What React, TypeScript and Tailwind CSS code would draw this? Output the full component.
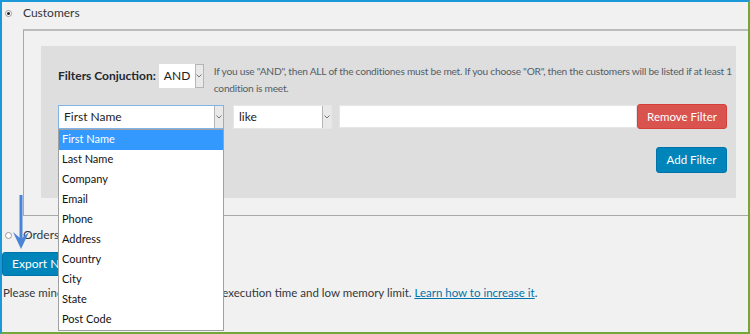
import React from "react";

const font = { fontFamily: 'Lato, "Open Sans", Arial, sans-serif' };

function Chevron() {
  return (
    <svg width="6" height="4" viewBox="0 0 6 4" className="block">
      <path d="M0.5 0.5 L3 3 L5.5 0.5" fill="none" stroke="#777" strokeWidth="1" />
    </svg>
  );
}

function SelectBox({
  text,
  width,
  focused,
  children,
}: {
  text: string;
  width: string;
  focused?: boolean;
  children?: React.ReactNode;
}) {
  return (
    <div
      className={`relative flex h-[24px] shrink-0 ${width} bg-white ${
        focused ? "border border-[#7eb4ea]" : "border border-[#e6e6e6]"
      }`}
    >
      <div className="flex flex-1 items-center pl-[5px] text-[12px] text-[#222]">{text}</div>
      <div className="flex w-[9px] items-center justify-center border-l border-[#b5b5b5] bg-[#e9e9e9]">
        <Chevron />
      </div>
      {children}
    </div>
  );
}

const options = [
  "First Name",
  "Last Name",
  "Company",
  "Email",
  "Phone",
  "Address",
  "Country",
  "City",
  "State",
  "Post Code",
];

export default function App() {
  return (
    <div
      className="relative h-[334px] w-[750px] overflow-hidden border-2 border-t-[#1b98d8] border-l-[#1b98d8] border-r-[#72a83a] border-b-[#72a83a] bg-[#f1f1f1] text-[#32373c]"
      style={font}
    >
      {/* Customers */}
      <div className="flex h-[22px] items-center">
        <div className="ml-[3px] flex h-[7px] w-[7px] items-center justify-center rounded-full border border-[#9a9a9a] bg-white">
          <div className="h-[3px] w-[3px] rounded-full bg-[#222]" />
        </div>
        <span className="ml-[11px] text-[12px] text-[#32373c]">Customers</span>
      </div>

      {/* Box */}
      <div className="ml-[21px] mt-[5px] border-t-2 border-l border-b border-t-[#bcbcbc] border-l-[#a8a8a8] border-b-[#a8a8a8] pb-[17px] pl-[17px] pr-[12px] pt-[15px]">
        <div className="bg-[#dedede] pb-[25px] pl-[17px] pr-[9px] pt-[18px]">
          <div className="flex items-start">
            <div className="flex shrink-0 items-center">
              <span className="whitespace-nowrap text-[12px] font-bold text-[#23282d]">Filters Conjuction:</span>
              <div className="ml-[3px] flex h-[24px] w-[45px]">
                <div className="flex flex-1 items-center bg-white pl-[5px] text-[12px] text-[#222]">AND</div>
                <div className="flex w-[9px] items-center justify-center border border-[#b5b5b5] bg-[#e9e9e9]">
                  <Chevron />
                </div>
              </div>
            </div>
            <div className="ml-[10px] -mt-[1px] min-w-0 text-[10.2px] leading-[17px] tracking-[-0.25px] text-[#555d66]">
              <div className="whitespace-nowrap">
                If you use "AND", then ALL of the conditiones must be met. If you choose "OR", then the customers will be listed if at least 1
              </div>
              <div>condition is meet.</div>
            </div>
          </div>

          <div className="mt-[7px] flex items-center">
            <SelectBox text="First Name" width="w-[166px]" focused>
              <div className="absolute left-[-1px] top-[23px] z-10 w-[166px] border border-[#a0a0a0] bg-white">
                {options.map((o, i) => (
                  <div
                    key={o}
                    className={`flex h-[20px] items-center pl-[3px] text-[11px] ${
                      i === 0 ? "bg-[#3399ff] text-white" : "text-[#111]"
                    }`}
                  >
                    {o}
                  </div>
                ))}
              </div>
            </SelectBox>
            <div className="ml-[9px]">
              <SelectBox text="like" width="w-[99px]" />
            </div>
            <div className="ml-[7px] h-[23px] min-w-0 flex-1 border border-[#e6e6e6] bg-white" />
            <button className="h-[25px] w-[90px] shrink-0 whitespace-nowrap rounded-[3px] border border-[#d43f3a] bg-[#d9534f] text-[11.5px] text-white">
              Remove Filter
            </button>
          </div>

          <div className="mt-[18px] flex justify-end">
            <button className="h-[26px] w-[71px] whitespace-nowrap rounded-[3px] border border-[#0073aa] bg-[#0085ba] text-[11.5px] text-white">
              Add Filter
            </button>
          </div>
        </div>
      </div>

      {/* Orders */}
      <div className="mt-[9px] flex h-[20px] items-center">
        <div className="ml-[3px] h-[7px] w-[7px] rounded-full border border-[#9a9a9a] bg-white" />
        <span className="ml-[11px] text-[12px] text-[#32373c]">Orders</span>
      </div>

      <div className="mt-[5px]">
        <button className="h-[24px] whitespace-nowrap rounded-[3px] border border-[#0073aa] bg-[#0085ba] px-[9px] text-[12px] text-white">
          Export Now
        </button>
      </div>

      <div className="ml-[1px] mt-[8px] whitespace-nowrap text-[11.5px] leading-[18px] text-[#32373c]">
        Please mind that it can fail due to the short execution time and low memory limit.{" "}
        <a className="text-[#0073aa] underline">Learn how to increase it</a>.
      </div>

      {/* annotation arrow */}
      <svg className="absolute left-[9px] top-[192px]" width="20" height="58" viewBox="0 0 20 58">
        <line x1="10" y1="1" x2="10" y2="46" stroke="#4a84d6" strokeWidth="3" />
        <path d="M2 38 L10 55 L18 38 L10 45 Z" fill="#4a84d6" />
      </svg>
    </div>
  );
}
